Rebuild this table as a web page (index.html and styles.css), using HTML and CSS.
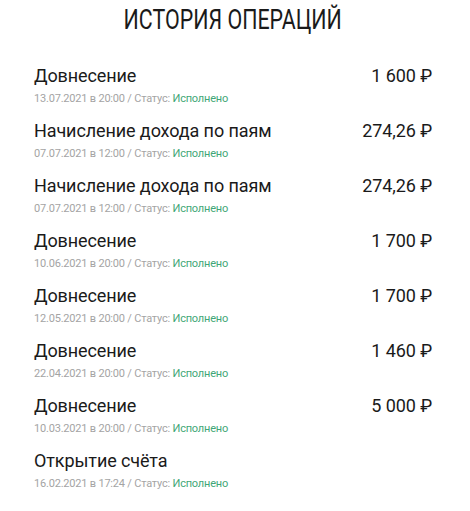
FILE: index.html
```html
<!DOCTYPE html>
<html lang="ru">
<head>
<meta charset="utf-8">
<link rel="stylesheet" href="styles.css">
</head>
<body>
<div class="page">
  <h1 class="title"><span class="title-text">ИСТОРИЯ ОПЕРАЦИЙ</span></h1>
  <ul class="ops">
    <li class="op">
      <div class="op-main"><span class="op-name">Довнесение</span><span class="op-sum">1 600 ₽</span></div>
      <div class="op-meta">13.07.2021 в 20:00 / Статус: <span class="ok">Исполнено</span></div>
    </li>
    <li class="op">
      <div class="op-main"><span class="op-name">Начисление дохода по паям</span><span class="op-sum">274,26 ₽</span></div>
      <div class="op-meta">07.07.2021 в 12:00 / Статус: <span class="ok">Исполнено</span></div>
    </li>
    <li class="op">
      <div class="op-main"><span class="op-name">Начисление дохода по паям</span><span class="op-sum">274,26 ₽</span></div>
      <div class="op-meta">07.07.2021 в 12:00 / Статус: <span class="ok">Исполнено</span></div>
    </li>
    <li class="op">
      <div class="op-main"><span class="op-name">Довнесение</span><span class="op-sum">1 700 ₽</span></div>
      <div class="op-meta">10.06.2021 в 20:00 / Статус: <span class="ok">Исполнено</span></div>
    </li>
    <li class="op">
      <div class="op-main"><span class="op-name">Довнесение</span><span class="op-sum">1 700 ₽</span></div>
      <div class="op-meta">12.05.2021 в 20:00 / Статус: <span class="ok">Исполнено</span></div>
    </li>
    <li class="op">
      <div class="op-main"><span class="op-name">Довнесение</span><span class="op-sum">1 460 ₽</span></div>
      <div class="op-meta">22.04.2021 в 20:00 / Статус: <span class="ok">Исполнено</span></div>
    </li>
    <li class="op">
      <div class="op-main"><span class="op-name">Довнесение</span><span class="op-sum">5 000 ₽</span></div>
      <div class="op-meta">10.03.2021 в 20:00 / Статус: <span class="ok">Исполнено</span></div>
    </li>
    <li class="op">
      <div class="op-main"><span class="op-name">Открытие счёта</span></div>
      <div class="op-meta">16.02.2021 в 17:24 / Статус: <span class="ok">Исполнено</span></div>
    </li>
  </ul>
</div>
</body>
</html>
```
FILE: styles.css
```css
html, body {
  margin: 0;
  padding: 0;
  background: #fff;
}
body {
  font-family: Roboto, "DejaVu Sans", sans-serif;
  color: #1a1a1a;
}
.page {
  width: 470px;
  padding: 0 38px 0 34px;
  box-sizing: border-box;
}
.title {
  margin: 0;
  padding-top: 4px;
  height: 65px;
  box-sizing: border-box;
  text-align: center;
  font-weight: 400;
  font-size: 28px;
  line-height: 32px;
  color: #1a1a1a;
}
.title-text {
  display: inline-block;
  transform: scaleX(0.765);
  transform-origin: center;
  white-space: nowrap;
}
.ops {
  list-style: none;
  margin: 0;
  padding: 0;
  display: flex;
  flex-direction: column;
  gap: 15px;
}
.op {
  display: flex;
  flex-direction: column;
  gap: 5px;
}
.op-main {
  display: flex;
  justify-content: space-between;
  font-size: 18px;
  line-height: 22px;
  letter-spacing: -0.1px;
}
.op-meta {
  font-size: 11px;
  line-height: 13px;
  color: #a4a4a4;
  letter-spacing: -0.2px;
}
.ok {
  color: #3fa777;
}
```
